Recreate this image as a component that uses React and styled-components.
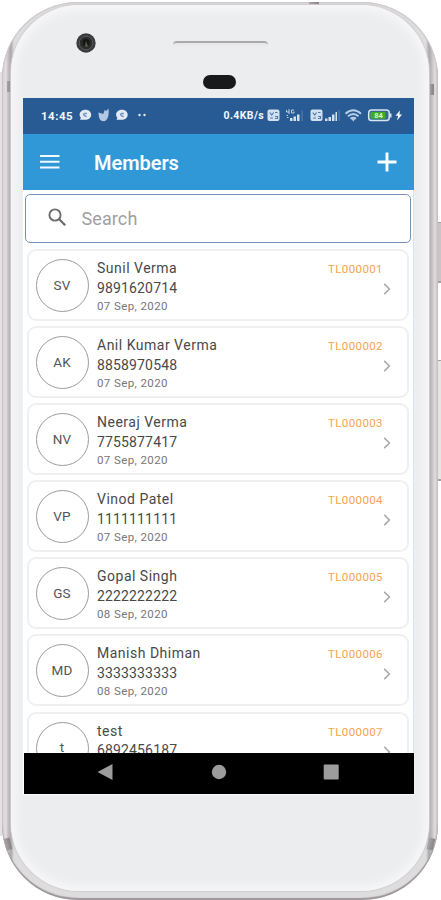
import styled, { createGlobalStyle } from "styled-components";

const members = [
  { initials: "SV", name: "Sunil Verma", phone: "9891620714", date: "07 Sep, 2020", id: "TL000001" },
  { initials: "AK", name: "Anil Kumar Verma", phone: "8858970548", date: "07 Sep, 2020", id: "TL000002" },
  { initials: "NV", name: "Neeraj Verma", phone: "7755877417", date: "07 Sep, 2020", id: "TL000003" },
  { initials: "VP", name: "Vinod Patel", phone: "1111111111", date: "07 Sep, 2020", id: "TL000004" },
  { initials: "GS", name: "Gopal Singh", phone: "2222222222", date: "08 Sep, 2020", id: "TL000005" },
  { initials: "MD", name: "Manish Dhiman", phone: "3333333333", date: "08 Sep, 2020", id: "TL000006" },
  { initials: "t", name: "test", phone: "6892456187", id: "TL000007" },
];

const StatusLeftIcons = () => (
  <svg width="70" height="14" viewBox="0 0 70 14">
    <g fill="#e4ebf5">
      <path d="M7.500 1.800c3.400 0 5.700 2.200 5.700 5s-2.300 5-5.700 5H2l.9-2.100c-.9-.8-1.300-1.800-1.300-2.900 0-2.800 2.500-5 5.900-5Z" />
      <path d="M44 1.800c3.400 0 5.700 2.200 5.700 5s-2.300 5-5.700 5h-5.500l.9-2.100c-.9-.8-1.300-1.800-1.300-2.900 0-2.800 2.500-5 5.900-5Z" />
      <circle cx="61.500" cy="7" r="1.200" />
      <circle cx="66.500" cy="7" r="1.200" />
    </g>
    <path d="M20.500 4.500 25.300 6l1.400-4 1.500 1L30.500.5c.6 5.500 0 9.500-2.400 11.800-2 1.600-5.300.8-6.400-1.400-.8-1.600-1.200-4.400-1.200-6.400Z" fill="#b4c8e4" />
    <path d="M5.300 5.500c.5 2 1.500 2.800 3.400 3.100M6 5.500h3M42.300 5.500c.5 2 1.500 2.800 3.400 3.100M43 5.500h3" fill="none" stroke="#7398c4" strokeWidth="1.300" />
  </svg>
);

const StatusRightIcons = () => (
  <svg width="138" height="16" viewBox="0 0 138 16">
    <g fill="#d3e0ef">
      <rect x=".5" y="2.500" width="12" height="11.500" rx="2" />
      <rect x="43.500" y="2.500" width="12" height="11.500" rx="2" />
      <path d="M23 11h2.500v3H23zM26.500 9.500H29V14h-2.500zM30 7.500h2.500V14H30z" />
      <path d="M58 11.500h2.500V14H58zM61.500 10H64v4h-2.500zM65 7.500h2.500V14H65zM68.500 5H70v9h-1.500z" />
    </g>
    <path d="M34.500 3.500h1.300V14h-1.300zM71.500 3h1.300v11h-1.300z" fill="#4d78a9" />
    <g fill="none" stroke="#4f7db0" strokeWidth="1.200">
      <path d="M2.800 5.500 4.700 8l2-2.500M8 5.500h2.500M3 11h3M8 9.500h2.500v2H8M45.800 5.500l1.900 2.500 2-2.500M51 5.500h2.500M46 11h3M51 9.500h2.500v2H51" />
    </g>
    <path d="M19.500 3v2h3M22 2v5M27 3h-2.500v3H27V4.500M19.500 8.500h1.500M20 10.500h1.500" fill="none" stroke="#b9cfe6" />
    <g fill="none" stroke="#b9cfe6" strokeWidth="1.900">
      <path d="M78.500 6.800c5-4.500 10.500-4.500 15.500 0M81 9.300c3.500-3 7-3 10.500 0M83.500 11.800c2-1.500 3.600-1.500 5.500 0" />
    </g>
    <path d="m84.500 12 1.800 2.500 1.800-2.500Z" fill="#b9cfe6" />
    <rect x="101.700" y="3" width="20.500" height="10.500" rx="2.800" fill="#396895" stroke="#d8e5ed" strokeWidth="1.500" />
    <rect x="103.500" y="5" width="15" height="6.700" rx="1" fill="#3dae22" />
    <path d="M123 6.500h1.500v4H123z" fill="#d8e5ed" />
    <path d="m133 3.500-4.500 5.200h2.700l-1.200 4.800 5-6h-2.600z" fill="#fff" />
    <text x="111.500" y="11" textAnchor="middle" fill="#d5f5c8" fontFamily="Roboto, sans-serif" fontSize="7.500" fontWeight="700">84</text>
  </svg>
);

const MenuIcon = () => (
  <svg width="20" height="14" viewBox="0 0 20 14" stroke="#f1faff" strokeWidth="2">
    <path d="M0 1h19.500M0 6.800h19.500M0 12.500h19.500" />
  </svg>
);

const PlusIcon = () => (
  <svg width="20" height="20" viewBox="0 0 20 20" stroke="#fff" strokeWidth="2.900">
    <path d="M.5 10h19M10 .5v19" />
  </svg>
);

const SearchIcon = () => (
  <svg width="19" height="19" viewBox="0 0 19 19" fill="none" stroke="#6c6c6c">
    <circle cx="7" cy="7" r="5.600" strokeWidth="1.900" />
    <path d="m11 11 6.200 6.200" strokeWidth="2.300" />
  </svg>
);

const Chevron = () => (
  <svg width="8" height="12" viewBox="0 0 8 12" fill="none" stroke="#a8a8a8" strokeWidth="1.500">
    <path d="m1.200.9 5.200 5.100-5.200 5.100" />
  </svg>
);

const CameraIcon = () => (
  <svg width="20" height="20" viewBox="0 0 20 20">
    <circle cx="10" cy="10" r="9.700" fill="#393b3a" />
    <circle cx="10" cy="10" r="6.800" fill="#2a2c2b" stroke="#5a5c5a" />
    <circle cx="10" cy="9.500" r="3.500" fill="#151714" />
    <path d="m10 8 2 5.500H9Z" fill="#5d6043" />
  </svg>
);

const App = () => {
  return (
    <Page>
      <GlobalStyle />
      <Rail />
      <Button $top={222} $height={61} />
      <Button $top={360} $height={121} $light />
      <Phone>
        <Band $left={309} $top={0} $width={10} $height={4} />
        <Band $left={7} $top={79} $width={4} $height={11} />
        <Band $left={429} $top={82} $width={5} $height={11} />
        <Band $left={5} $top={836} $width={6} $height={12} $tilt={-14} />
        <Band $left={428} $top={836} $width={6} $height={12} $tilt={14} />
        <Face>
          <Camera><CameraIcon /></Camera>
          <Speaker />
          <Sensor />
          <Screen>
            <StatusBar>
              <Time>14:45</Time>
              <StatusLeftIcons />
              <Speed>0.4KB/s</Speed>
              <StatusRightIcons />
            </StatusBar>
            <AppBar>
              <MenuIcon />
              <Title>Members</Title>
              <PlusIcon />
            </AppBar>
            <Body>
              <SearchBox>
                <SearchIcon />
                <SearchText>Search</SearchText>
              </SearchBox>
              <List>
                {members.map((member) => (
                  <Card key={member.id}>
                    <Avatar>{member.initials}</Avatar>
                    <Details>
                      <Name>{member.name}</Name>
                      <Number>{member.phone}</Number>
                      {member.date && <Date>{member.date}</Date>}
                    </Details>
                    <Side>
                      <MemberId>{member.id}</MemberId>
                      <Chevron />
                    </Side>
                  </Card>
                ))}
              </List>
            </Body>
            <NavBar>
              <svg width="389" height="41" viewBox="0 0 389 41" fill="#9c9c9c">
                <path d="M73.500 19 88.500 11v16Z" />
                <circle cx="195" cy="19" r="7.200" />
                <rect x="299.700" y="11.500" width="15" height="15" rx="1" />
              </svg>
            </NavBar>
          </Screen>
        </Face>
      </Phone>
    </Page>
  );
};

export default App;

const GlobalStyle = createGlobalStyle`
  body {
    margin: 0;
    background: #fff;
    font-family: Roboto, sans-serif;
  }
  * {
    box-sizing: border-box;
  }
`;

const Page = styled.div`
  position: relative;
  width: 441px;
  height: 900px;
  padding: 2px 3px 0 2px;
  overflow: hidden;
  background: #fff;
`;

/* soft edge of the frame along the left side */
const Rail = styled.div`
  position: absolute;
  left: 0;
  top: 72px;
  width: 4px;
  height: 764px;
  background: #e6e1e3;
`;

const Button = styled.div`
  position: absolute;
  left: 436px;
  top: ${(props) => props.$top}px;
  width: 5px;
  height: ${(props) => props.$height}px;
  background: ${(props) => (props.$light ? "#e5e5e2" : "#c9c4c6")};
  border: solid #a5a2a4;
  border-width: 1px 0 2px;
`;

const Phone = styled.div`
  position: relative;
  width: 436px;
  height: 898px;
  padding: 3px 9px 9px;
  border-radius: 76px;
  background: linear-gradient(90deg, #d9d3d5 0, #e3dddf 4px, #c6c1c4 6px, #aaa6a9 9px, #ddd 12px, #ddd 424px, #aaa6a9 427px, #c5c0c3 430px, #e3dddf 433px, #bdb7ba 436px);
  box-shadow: inset 0 -2px 1px #9d969b, inset 0 0 1px 1px #cdc7ca;
`;

/* antenna lines on the metal rim */
const Band = styled.i`
  position: absolute;
  left: ${(props) => props.$left - 2}px;
  top: ${(props) => props.$top}px;
  width: ${(props) => props.$width}px;
  height: ${(props) => props.$height}px;
  background: linear-gradient(90deg, #aaa6a6, #858284);
  transform: rotate(${(props) => props.$tilt || 0}deg);
`;

const Face = styled.div`
  position: relative;
  display: flex;
  flex-direction: column;
  width: 418px;
  height: 886px;
  padding: 93px 0 0 12px;
  border-radius: 68px;
  background: #ecedef;
  box-shadow: inset 0 0 10px 5px #f7f7f9, 0 0 1px 1px #d2cdd0;
`;

const Camera = styled.div`
  position: absolute;
  left: 65px;
  top: 28px;
  height: 20px;
  line-height: 0;
`;

const Speaker = styled.div`
  position: absolute;
  left: 162px;
  top: 36px;
  width: 95px;
  height: 6px;
  border-top: 2px solid #aaaaae;
  border-radius: 4px 4px 0 0;
  background: linear-gradient(#e6e6e9, #ecedef);
`;

const Sensor = styled.div`
  position: absolute;
  left: 192px;
  top: 70px;
  width: 33px;
  height: 14px;
  border-radius: 7px;
  background: #17191b;
`;

const Screen = styled.div`
  display: flex;
  flex-direction: column;
  width: 390.5px;
  height: 696px;
  background: #fff;
  box-shadow: 0 1px 1px #fafafa;
`;

const StatusBar = styled.div`
  display: flex;
  align-items: center;
  flex: 0 0 36px;
  padding: 0 9px 2px 18px;
  background: #285b94;
  color: #f3f7fc;
  font-size: 11.5px;
  font-weight: 700;
`;

const Time = styled.span`
  width: 37px;
  margin-top: 1px;
  letter-spacing: 0.5px;
`;

const Speed = styled.span`
  width: 43px;
  margin: 1px 0 0 auto;
  font-size: 10.5px;
  letter-spacing: 0.4px;
  white-space: nowrap;
`;

const AppBar = styled.header`
  display: flex;
  align-items: center;
  flex: 0 0 56px;
  padding: 0 17px 0 17px;
  background: #3198d7;
`;

const Title = styled.h1`
  flex: 1;
  margin: 2px 0 0 34px;
  color: #f8fcff;
  font-size: 20px;
  font-weight: 600;
  letter-spacing: -0.05px;
`;

const Body = styled.main`
  height: 563px;
  padding: 4px 2px 0;
  overflow: hidden;
  border-right: 1px solid #d4e4f0;
`;

const SearchBox = styled.div`
  display: flex;
  align-items: center;
  width: 386px;
  height: 49px;
  padding: 0 0 2px 21.5px;
  border: 1.5px solid #7893b9;
  border-radius: 5px;
`;

const SearchText = styled.span`
  margin: 1px 0 0 15px;
  color: #a0a0a0;
  font-size: 18px;
  letter-spacing: 0.1px;
`;

const List = styled.div`
  display: flex;
  flex-direction: column;
  gap: 5.1px;
  margin: 6px 0 0 2px;
`;

const Card = styled.article`
  display: flex;
  flex: 0 0 72px;
  width: 382px;
  padding: 8px 16px 0 6.5px;
  border: 2px solid #f0f0ef;
  border-radius: 9px;
  background: #fff;
`;

const Avatar = styled.div`
  display: flex;
  align-items: center;
  justify-content: center;
  width: 53px;
  height: 53px;
  padding-bottom: 2px;
  border: 1px solid #999d9c;
  border-radius: 50%;
  color: #555;
  font-size: 13.5px;
  letter-spacing: 0.2px;
`;

const Details = styled.div`
  display: flex;
  flex-direction: column;
  flex: 1;
  margin-left: 8.5px;
  color: #494949;
`;

const Name = styled.span`
  height: 19.5px;
  font-size: 14px;
  line-height: 18px;
  letter-spacing: 0.5px;
`;

const Number = styled.span`
  height: 19px;
  font-size: 14px;
  line-height: 18px;
  letter-spacing: 0.15px;
`;

const Date = styled.span`
  color: #777;
  font-size: 11.5px;
  line-height: 16px;
  letter-spacing: 0.4px;
`;

const Side = styled.div`
  display: flex;
  flex-direction: column;
  align-items: flex-end;
  width: 66px;

  svg {
    margin-top: 3px;
  }
`;

const MemberId = styled.span`
  margin-right: 8px;
  color: #f8a34f;
  font-size: 11.5px;
  line-height: 21px;
  letter-spacing: 0.4px;
`;

const NavBar = styled.nav`
  flex: 0 0 41px;
  margin-left: 1px;
  background: #000;
  line-height: 0;
`;
